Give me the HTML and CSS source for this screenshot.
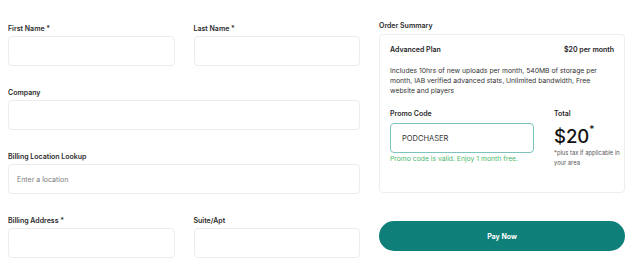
FILE: index.html
```html
<!DOCTYPE html>
<html>
<head>
<meta charset="utf-8">
<link rel="stylesheet" href="styles.css">
</head>
<body>
<div class="page">
  <form class="form">
    <div class="row two">
      <div class="field">
        <label class="label">First Name *</label>
        <div class="input"></div>
      </div>
      <div class="field">
        <label class="label">Last Name *</label>
        <div class="input"></div>
      </div>
    </div>
    <div class="field">
      <label class="label">Company</label>
      <div class="input"></div>
    </div>
    <div class="field">
      <label class="label">Billing Location Lookup</label>
      <div class="input placeholder">Enter a location</div>
    </div>
    <div class="row two">
      <div class="field">
        <label class="label">Billing Address *</label>
        <div class="input"></div>
      </div>
      <div class="field">
        <label class="label">Suite/Apt</label>
        <div class="input"></div>
      </div>
    </div>
  </form>
  <aside class="summary">
    <div class="label">Order Summary</div>
    <div class="card">
      <div class="plan">
        <span>Advanced Plan</span>
        <span>$20 per month</span>
      </div>
      <p class="desc">Includes 10hrs of new uploads per month, 540MB of storage per month, IAB verified advanced stats, Unlimited bandwidth, Free website and players</p>
      <div class="checkout">
        <div class="promo">
          <div class="label">Promo Code</div>
          <div class="input promo-input">PODCHASER</div>
          <div class="valid">Promo code is valid. Enjoy 1 month free.</div>
        </div>
        <div class="total">
          <div class="label">Total</div>
          <div class="price">$20<sup>*</sup></div>
          <div class="note">*plus tax if applicable in your area</div>
        </div>
      </div>
    </div>
    <button class="pay" type="button">Pay Now</button>
  </aside>
</div>
</body>
</html>
```

FILE: styles.css
```css
* { box-sizing: border-box; }
html, body { margin: 0; background: #fff; }
body {
  font-family: Inter, "Noto Sans", "Liberation Sans", sans-serif;
  color: #222;
  padding: 23px 0 0 8px;
}
.page {
  display: flex;
  gap: 19px;
}
.form {
  width: 352px;
  display: flex;
  flex-direction: column;
  gap: 21px;
  margin: 0;
}
.row.two {
  display: grid;
  grid-template-columns: 1fr 1fr;
  gap: 19px;
}
.field {
  display: flex;
  flex-direction: column;
  gap: 1px;
}
.label {
  font-size: 7px;
  line-height: 12px;
  font-weight: 600;
  color: #2b2b2b;
}
.input {
  height: 30px;
  border: 1px solid #ececec;
  border-radius: 4px;
  background: #fff;
  font-size: 7px;
  display: flex;
  align-items: center;
  padding-left: 8px;
}
.placeholder { color: #7a7a7a; }
.summary {
  width: 246px;
  margin-top: -3px;
  display: flex;
  flex-direction: column;
}
.summary > .label { margin-bottom: 2px; }
.card {
  border: 1px solid #eeeeee;
  border-radius: 4px;
  padding: 9px 10px 24px 10px;
}
.plan {
  display: flex;
  justify-content: space-between;
  font-size: 7px;
  line-height: 12px;
  font-weight: 600;
}
.desc {
  margin: 10px 0 12px 0;
  font-size: 6.8px;
  line-height: 10px;
  color: #333;
}
.checkout {
  display: flex;
  gap: 20px;
}
.promo {
  width: 144px;
  display: flex;
  flex-direction: column;
}
.promo .label { margin-bottom: 3px; }
.promo-input {
  border: 1px solid #7cc3bf;
  color: #333;
  font-size: 7.5px;
  padding-left: 11px;
}
.valid {
  font-size: 6.8px;
  line-height: 10px;
  color: #4cb86a;
  margin-top: 1px;
}
.total { flex: 1; }
.total .label { margin-bottom: 4px; }
.price {
  font-size: 18.5px;
  line-height: 24px;
  font-weight: 500;
  color: #111;
}
.price sup {
  font-size: 10px;
  vertical-align: top;
  line-height: 10px;
}
.note {
  font-size: 5.8px;
  line-height: 10px;
  color: #555;
  margin-right: -8px;
}
.pay {
  margin-top: 28px;
  height: 30px;
  border: none;
  border-radius: 15px;
  background: #0f7f7a;
  color: #fff;
  font-family: inherit;
  font-size: 7px;
  font-weight: 700;
}
```
